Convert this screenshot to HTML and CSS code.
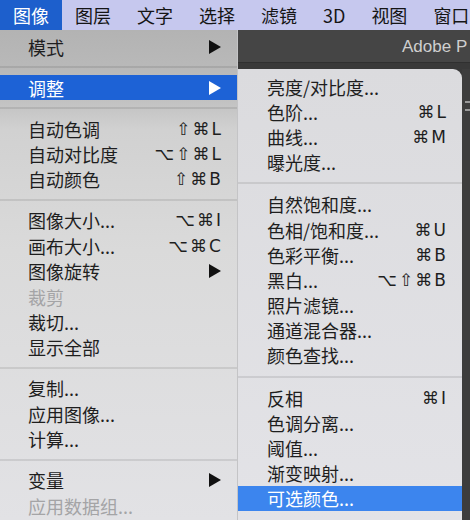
FILE: index.html
```html
<!DOCTYPE html>
<html lang="zh-CN">
<head>
  <meta charset="UTF-8" />
  <title>图像菜单</title>
  <link rel="stylesheet" href="styles.css">
</head>
<body>
  <div class="menubar">
    <span class="bar-item active">图像</span>
    <span class="bar-item">图层</span>
    <span class="bar-item">文字</span>
    <span class="bar-item">选择</span>
    <span class="bar-item">滤镜</span>
    <span class="bar-item">3D</span>
    <span class="bar-item">视图</span>
    <span class="bar-item">窗口</span>
  </div>

  <div class="stage">
    <ul class="menu main-menu">
      <li class="row">模式<span class="arrow"></span></li>
      <li class="sep"></li>
      <li class="row selected">调整<span class="arrow"></span></li>
      <li class="sep"></li>
      <li class="row">自动色调<span class="key">⇧⌘L</span></li>
      <li class="row">自动对比度<span class="key">⌥⇧⌘L</span></li>
      <li class="row">自动颜色<span class="key">⇧⌘B</span></li>
      <li class="sep"></li>
      <li class="row">图像大小...<span class="key">⌥⌘I</span></li>
      <li class="row">画布大小...<span class="key">⌥⌘C</span></li>
      <li class="row">图像旋转<span class="arrow"></span></li>
      <li class="row disabled">裁剪</li>
      <li class="row">裁切...</li>
      <li class="row">显示全部</li>
      <li class="sep"></li>
      <li class="row">复制...</li>
      <li class="row">应用图像...</li>
      <li class="row">计算...</li>
      <li class="sep"></li>
      <li class="row">变量<span class="arrow"></span></li>
      <li class="row disabled">应用数据组...</li>
    </ul>

    <div class="backdrop">
      <div class="titlebar">Adobe P</div>
      <div class="under">
        <ul class="menu sub-menu">
          <li class="row">亮度/对比度...</li>
          <li class="row">色阶...<span class="key">⌘L</span></li>
          <li class="row">曲线...<span class="key">⌘M</span></li>
          <li class="row">曝光度...</li>
          <li class="sep"></li>
          <li class="row">自然饱和度...</li>
          <li class="row">色相/饱和度...<span class="key">⌘U</span></li>
          <li class="row">色彩平衡...<span class="key">⌘B</span></li>
          <li class="row">黑白...<span class="key">⌥⇧⌘B</span></li>
          <li class="row">照片滤镜...</li>
          <li class="row">通道混合器...</li>
          <li class="row">颜色查找...</li>
          <li class="sep"></li>
          <li class="row">反相<span class="key">⌘I</span></li>
          <li class="row">色调分离...</li>
          <li class="row">阈值...</li>
          <li class="row">渐变映射...</li>
          <li class="row picked">可选颜色...</li>
        </ul>
        <div class="edge"><span class="mark"></span></div>
      </div>
    </div>
  </div>
</body>
</html>
```

FILE: styles.css
```css
* {
  box-sizing: border-box;
  margin: 0;
  padding: 0;
}

body {
  width: 470px;
  height: 520px;
  overflow: hidden;
  font-family: "Noto Sans CJK SC", "Noto Sans", "DejaVu Sans", sans-serif;
  color: #1e1e1e;
  background: #3b3b3b;
}

/* barra de menús */
.menubar {
  display: flex;
  height: 30px;
  background: #c6c8ee;
  font-size: 18px;
  line-height: 30px;
  white-space: nowrap;
  overflow: hidden;
}

.bar-item {
  padding: 0 13px;
  color: #151515;
}

.bar-item.active {
  background: #1d5fcc;
  color: #fff;
}

.stage {
  display: flex;
  height: 490px;
}

.menu {
  list-style: none;
  font-size: 18px;
}

.row {
  display: flex;
  align-items: center;
  justify-content: space-between;
  white-space: nowrap;
}

.main-menu .row {
  height: 25.4px;
  padding: 0 16px 0 28px;
}

.sub-menu .row {
  height: 25.2px;
  padding: 0 16px 0 29px;
}

.main-menu .sep {
  height: 15.6px;
  display: flex;
  align-items: center;
}

.sub-menu .sep {
  height: 17px;
  display: flex;
  align-items: center;
}

.sep::after {
  content: "";
  display: block;
  width: 100%;
  height: 2px;
  background: rgba(0, 0, 0, 0.09);
}

.main-menu {
  width: 238px;
  flex-shrink: 0;
  padding-top: 4px;
  background: linear-gradient(#b3b3b3 0, #bcbcbc 60px, #d1d1d1 100px, #dadada 220px, #e2e2e5 100%);
  border-right: 1px solid #c4c4c6;
}

.row.selected {
  background: #1d62d6;
  color: #fff;
}

.row.disabled {
  color: #a4a4a6;
}

.key {
  font-family: "DejaVu Sans", "Noto Sans", sans-serif;
  font-size: 17px;
  letter-spacing: 2px;
  margin-right: -2px;
}

.arrow {
  width: 0;
  height: 0;
  border-left: 12px solid #111;
  border-top: 7px solid transparent;
  border-bottom: 7px solid transparent;
}

.selected .arrow {
  border-left-color: #fff;
}

/* ventana de fondo */
.backdrop {
  flex: 1;
  display: flex;
  flex-direction: column;
  min-width: 0;
}

.titlebar {
  height: 33px;
  background: #454545;
  color: #cfcfcf;
  font-family: "Liberation Sans", Arial, sans-serif;
  font-size: 17px;
  line-height: 33px;
  padding-left: 164px;
  white-space: nowrap;
  overflow: hidden;
  border-bottom: 1px solid #303030;
}

.under {
  flex: 1;
  display: flex;
  padding-top: 6px;
  background: #393939;
  min-height: 0;
}

.sub-menu {
  width: 224px;
  flex-shrink: 0;
  padding-top: 5px;
  border-radius: 0 9px 0 0;
  background: linear-gradient(#dbdbde, #e3e3e7);
  overflow: hidden;
}

.row.picked {
  background: #3c85ee;
  color: #fff;
}

.edge {
  flex: 1;
  background: #3d3d3d;
  position: relative;
}

.edge .mark {
  position: absolute;
  top: 32px;
  left: 3px;
  width: 5px;
  height: 10px;
  border-top: 2px solid #9a9a9a;
  border-bottom: 2px solid #9a9a9a;
}
```
